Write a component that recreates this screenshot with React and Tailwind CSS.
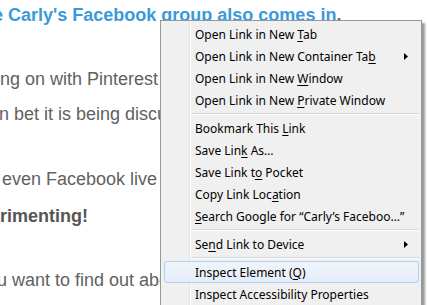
import React from 'react';

const items = [
  { label: ['Open Link in New ', 'T', 'ab'] },
  { label: ['Open Link in New Container Ta', 'b', ''], sub: true },
  { label: ['Open Link in New ', 'W', 'indow'] },
  { label: ['Open Link in New ', 'P', 'rivate Window'] },
  { sep: true },
  { label: ['Bookmark This ', 'L', 'ink'] },
  { label: ['Save Lin', 'k', ' As…'] },
  { label: ['Save Link t', 'o', ' Pocket'] },
  { label: ['Copy Link Loc', 'a', 'tion'] },
  { label: ['', 'S', 'earch Google for \u201cCarly\u2019s Faceboo…\u201d'] },
  { sep: true },
  { label: ['Se', 'n', 'd Link to Device'], sub: true },
  { sep: true },
  { label: ['Inspect Element (', 'Q', ')'], active: true },
  { label: ['Inspect Accessibility Properties', '', ''] },
];

function Arrow() {
  return (
    <svg width="4" height="7" viewBox="0 0 4 7" className="absolute right-[10px] top-[7px]">
      <path d="M0 0 L4 3.5 L0 7 Z" fill="#000" />
    </svg>
  );
}

function MenuItem({ item }) {
  if (item.sep) {
    return (
      <div className="h-[6px] flex flex-col justify-center ml-[31px] mr-[2px]">
        <div className="h-px bg-[#d7d7d7]" />
        <div className="h-px bg-white" />
      </div>
    );
  }
  const [a, key, b] = item.label;
  return (
    <div
      className={
        'relative h-[22px] ml-[3px] mr-[2px] pl-[30px] pt-[1px] flex items-center whitespace-nowrap border rounded-[3px] ' +
        (item.active
          ? 'border-[#aecff7] bg-gradient-to-b from-[#f1f5fb] to-[#e4ecf7]'
          : 'border-transparent')
      }
    >
      <span>
        {a}
        {key && <span className="underline underline-offset-[2px]">{key}</span>}
        {b}
      </span>
      {item.sub && <Arrow />}
    </div>
  );
}

export default function App() {
  return (
    <div className="relative w-[428px] h-[305px] overflow-hidden bg-white">
      <div className="text-[18px] text-[#616161] whitespace-nowrap" style={{ fontFamily: '"Liberation Sans", Arial, sans-serif' }}>
        <div className="mt-[-3px] leading-[36px] ml-[-7px] font-bold">
          <span className="text-[#3a9ad9]">e Carly's Facebook group also comes in</span>
          <span className="text-[#555]">.</span>
        </div>
        <div className="mt-[29px] leading-[35px]">
          <div>ng on with Pinterest and Instagram, you can</div>
          <div className="ml-[-1px]">n bet it is being discussed in the group too.</div>
        </div>
        <div className="mt-[29px] leading-[37px]">
          <div className="ml-[2px]">even Facebook live videos are showing up</div>
          <div className="font-bold text-[#555]">rimenting!</div>
        </div>
        <div className="mt-[27px] leading-[36px] ml-[-3px]">
          u want to find out about it all, join the group
        </div>
      </div>

      <div
        className="absolute left-[160px] top-[20px] w-[262px] border border-[#979797] bg-[#f0f0f0] pt-[2px] pb-[2px] text-[12px] text-black shadow-[3px_3px_2px_rgba(0,0,0,0.4)]"
        style={{ fontFamily: '"Noto Sans", "Open Sans", sans-serif' }}
      >
        <div className="absolute left-[28px] top-0 bottom-0 w-px bg-[#e2e3e3]" />
        <div className="absolute left-[29px] top-0 bottom-0 w-px bg-white" />
        {items.map((item, i) => (
          <MenuItem key={i} item={item} />
        ))}
      </div>
    </div>
  );
}
